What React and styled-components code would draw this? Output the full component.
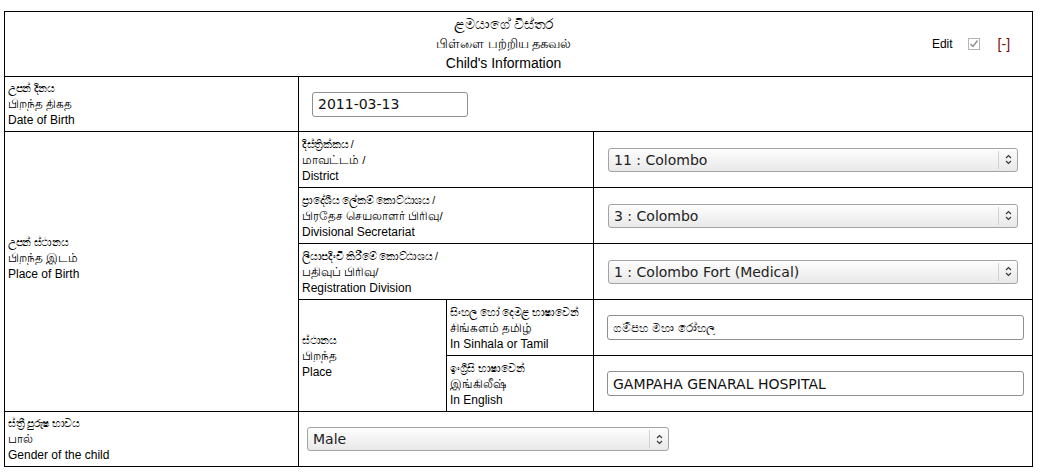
import React from "react";
import styled, { createGlobalStyle } from "styled-components";

const GlobalStyles = createGlobalStyle`
  body {
    margin: 0;
    background: #fff;
    color: #000;
    font-family: "Liberation Sans", "Noto Sans", "DejaVu Sans", sans-serif;
  }
`;

const Page = styled.div`
  padding: 11px 0 0 4px;
`;

const Table = styled.table`
  width: 1028px;
  border-collapse: collapse;
  table-layout: fixed;
  font-size: 12px;
`;

const Cell = styled.td`
  border: 1px solid #000;
  padding: ${(p) => p.$pad || "0 3px"};
  height: ${(p) => p.$h || 54}px;
  vertical-align: middle;
  text-align: ${(p) => p.$align || "left"};
  overflow: hidden;
`;

const Header = styled.div`
  display: grid;
  align-items: center;
`;

const Title = styled.div`
  grid-area: 1 / 1;
  text-align: center;
  font-size: 14px;
  padding-right: 30px;
`;

const TitleLine = styled.div`
  height: 19.5px;
  line-height: 19.5px;
  white-space: nowrap;
  font-size: ${(p) => p.$size || 14}px;
`;

const Controls = styled.div`
  grid-area: 1 / 1;
  justify-self: end;
  display: flex;
  align-items: center;
  gap: 15px;
  margin-right: 22px;
  font-size: 12px;
`;

const CheckBox = styled.label`
  position: relative;
  display: inline-flex;
  width: 12px;
  height: 12px;
`;

const Check = styled.input`
  appearance: none;
  margin: 0;
  width: 12px;
  height: 12px;
  box-sizing: border-box;
  border: 1px solid #b5b5b5;
  background: #fff;
`;

const Tick = styled.svg`
  position: absolute;
  left: 1px;
  top: 1px;
  pointer-events: none;
`;

const Toggle = styled.span`
  color: #7a0a0a;
  font-size: 14px;
  margin-left: 3px;
`;

const Label = styled.div`
  padding-bottom: ${(p) => p.$shift || 0}px;
`;

const Line = styled.div`
  height: 16px;
  line-height: 16px;
  white-space: nowrap;
  font-size: ${(p) => p.$size || 12}px;
  letter-spacing: ${(p) => p.$ls || 0}px;
`;

const TextInput = styled.input`
  box-sizing: border-box;
  width: ${(p) => p.$w}px;
  height: 25px;
  border: 1px solid #8f8f8f;
  border-radius: 3px;
  padding: 0 5px;
  font-family: "DejaVu Sans", sans-serif;
  font-size: ${(p) => p.$size || 14}px;
  color: #111;
  background: #fff;
  outline: none;
  vertical-align: middle;
`;

const SelectWrap = styled.div`
  position: relative;
  display: inline-block;
  width: ${(p) => p.$w}px;
  height: 24px;
  vertical-align: middle;
`;

const Select = styled.select`
  appearance: none;
  box-sizing: border-box;
  width: 100%;
  height: 100%;
  border: 1px solid #a3a3a3;
  border-radius: 3px;
  padding: 0 24px 0 5px;
  font-family: "DejaVu Sans", sans-serif;
  font-size: 14px;
  color: #222;
  background: linear-gradient(#fdfdfd, #e9e9e9);
  outline: none;
`;

const Arrow = styled.div`
  position: absolute;
  top: 3px;
  bottom: 3px;
  right: 0;
  width: 19px;
  border-left: 1px solid #d2d2d2;
  display: flex;
  align-items: center;
  justify-content: center;
  pointer-events: none;
`;

const Dropdown = ({ width, value }) => (
  <SelectWrap $w={width}>
    <Select defaultValue={value}>
      <option>{value}</option>
    </Select>
    <Arrow>
      <svg width="7" height="11" viewBox="0 0 7 11">
        <path d="M1 4 L3.5 1.5 L6 4 M1 7 L3.5 9.5 L6 7" fill="none" stroke="#333" strokeWidth="1.1" />
      </svg>
    </Arrow>
  </SelectWrap>
);

const Lines = ({ si, ta, en, shift }) => (
  <Label $shift={shift}>
    <Line $size={10.5} $ls={-0.3}>{si}</Line>
    <Line $size={11.5}>{ta}</Line>
    <Line>{en}</Line>
  </Label>
);

const App = () => {
  return (
    <Page>
      <GlobalStyles />
      <Table>
        <colgroup>
          <col style={{ width: 294 }} />
          <col style={{ width: 148 }} />
          <col style={{ width: 147 }} />
          <col style={{ width: 439 }} />
        </colgroup>
        <tbody>
          <tr>
            <Cell colSpan={4} $h={64} $pad="0">
              <Header>
                <Title>
                  <TitleLine $size={13.5}>ළමයාගේ විස්තර</TitleLine>
                  <TitleLine $size={13}>பிள்ளை பற்றிய தகவல்</TitleLine>
                  <TitleLine>Child's Information</TitleLine>
                </Title>
                <Controls>
                  <span>Edit</span>
                  <CheckBox>
                    <Check type="checkbox" defaultChecked disabled />
                    <Tick width="10" height="10" viewBox="0 0 10 10">
                      <path d="M1.5 5 L4 7.5 L8.5 1.5" fill="none" stroke="#8a8a8a" strokeWidth="1.3" />
                    </Tick>
                  </CheckBox>
                  <Toggle>[-]</Toggle>
                </Controls>
              </Header>
            </Cell>
          </tr>
          <tr>
            <Cell>
              <Lines si="උපන් දිනය" ta="பிறந்த திகத" en="Date of Birth" />
            </Cell>
            <Cell colSpan={3} $pad="0 0 0 13px">
              <TextInput $w={156} defaultValue="2011-03-13" />
            </Cell>
          </tr>
          <tr>
            <Cell rowSpan={5}>
              <Lines si="උපන් ස්ථානය" ta="பிறந்த இடம்" en="Place of Birth" shift={28} />
            </Cell>
            <Cell colSpan={2} $h={55}>
              <Lines si="දිස්ත්‍රික්කය /" ta="மாவட்டம் /" en="District" />
            </Cell>
            <Cell $align="center" $pad="0">
              <Dropdown width={410} value="11 : Colombo" />
            </Cell>
          </tr>
          <tr>
            <Cell colSpan={2} $h={55}>
              <Lines si="ප්‍රාදේශීය ලේකම් කොට්ඨාශය /" ta="பிரதேச செயலாளர் பிரிவு/" en="Divisional Secretariat" />
            </Cell>
            <Cell $align="center" $pad="0">
              <Dropdown width={410} value="3 : Colombo" />
            </Cell>
          </tr>
          <tr>
            <Cell colSpan={2} $h={55}>
              <Lines si="ලියාපදිංචි කිරීමේ කොට්ඨාශය /" ta="பதிவுப் பிரிவு/" en="Registration Division" />
            </Cell>
            <Cell $align="center" $pad="0">
              <Dropdown width={410} value="1 : Colombo Fort (Medical)" />
            </Cell>
          </tr>
          <tr>
            <Cell rowSpan={2}>
              <Lines si="ස්ථානය" ta="பிறந்த" en="Place" />
            </Cell>
            <Cell $h={55}>
              <Lines si="සිංහල හෝ දෙමළ භාෂාවෙන්" ta="சிங்களம் தமிழ்" en="In Sinhala or Tamil" />
            </Cell>
            <Cell $pad="0 0 0 13px">
              <TextInput $w={417} $size={12} defaultValue="ගම්පහ මහා රෝහල" />
            </Cell>
          </tr>
          <tr>
            <Cell $h={55}>
              <Lines si="ඉංග්‍රීසි භාෂාවෙන්" ta="இங்கிலீஷ்" en="In English" />
            </Cell>
            <Cell $pad="0 0 0 13px">
              <TextInput $w={417} defaultValue="GAMPAHA GENARAL HOSPITAL" />
            </Cell>
          </tr>
          <tr>
            <Cell>
              <Lines si="ස්ත්‍රී පුරුෂ භාවය" ta="பால்" en="Gender of the child" />
            </Cell>
            <Cell colSpan={3} $pad="0 0 0 8px">
              <Dropdown width={362} value="Male" />
            </Cell>
          </tr>
        </tbody>
      </Table>
    </Page>
  );
};

export default App;
